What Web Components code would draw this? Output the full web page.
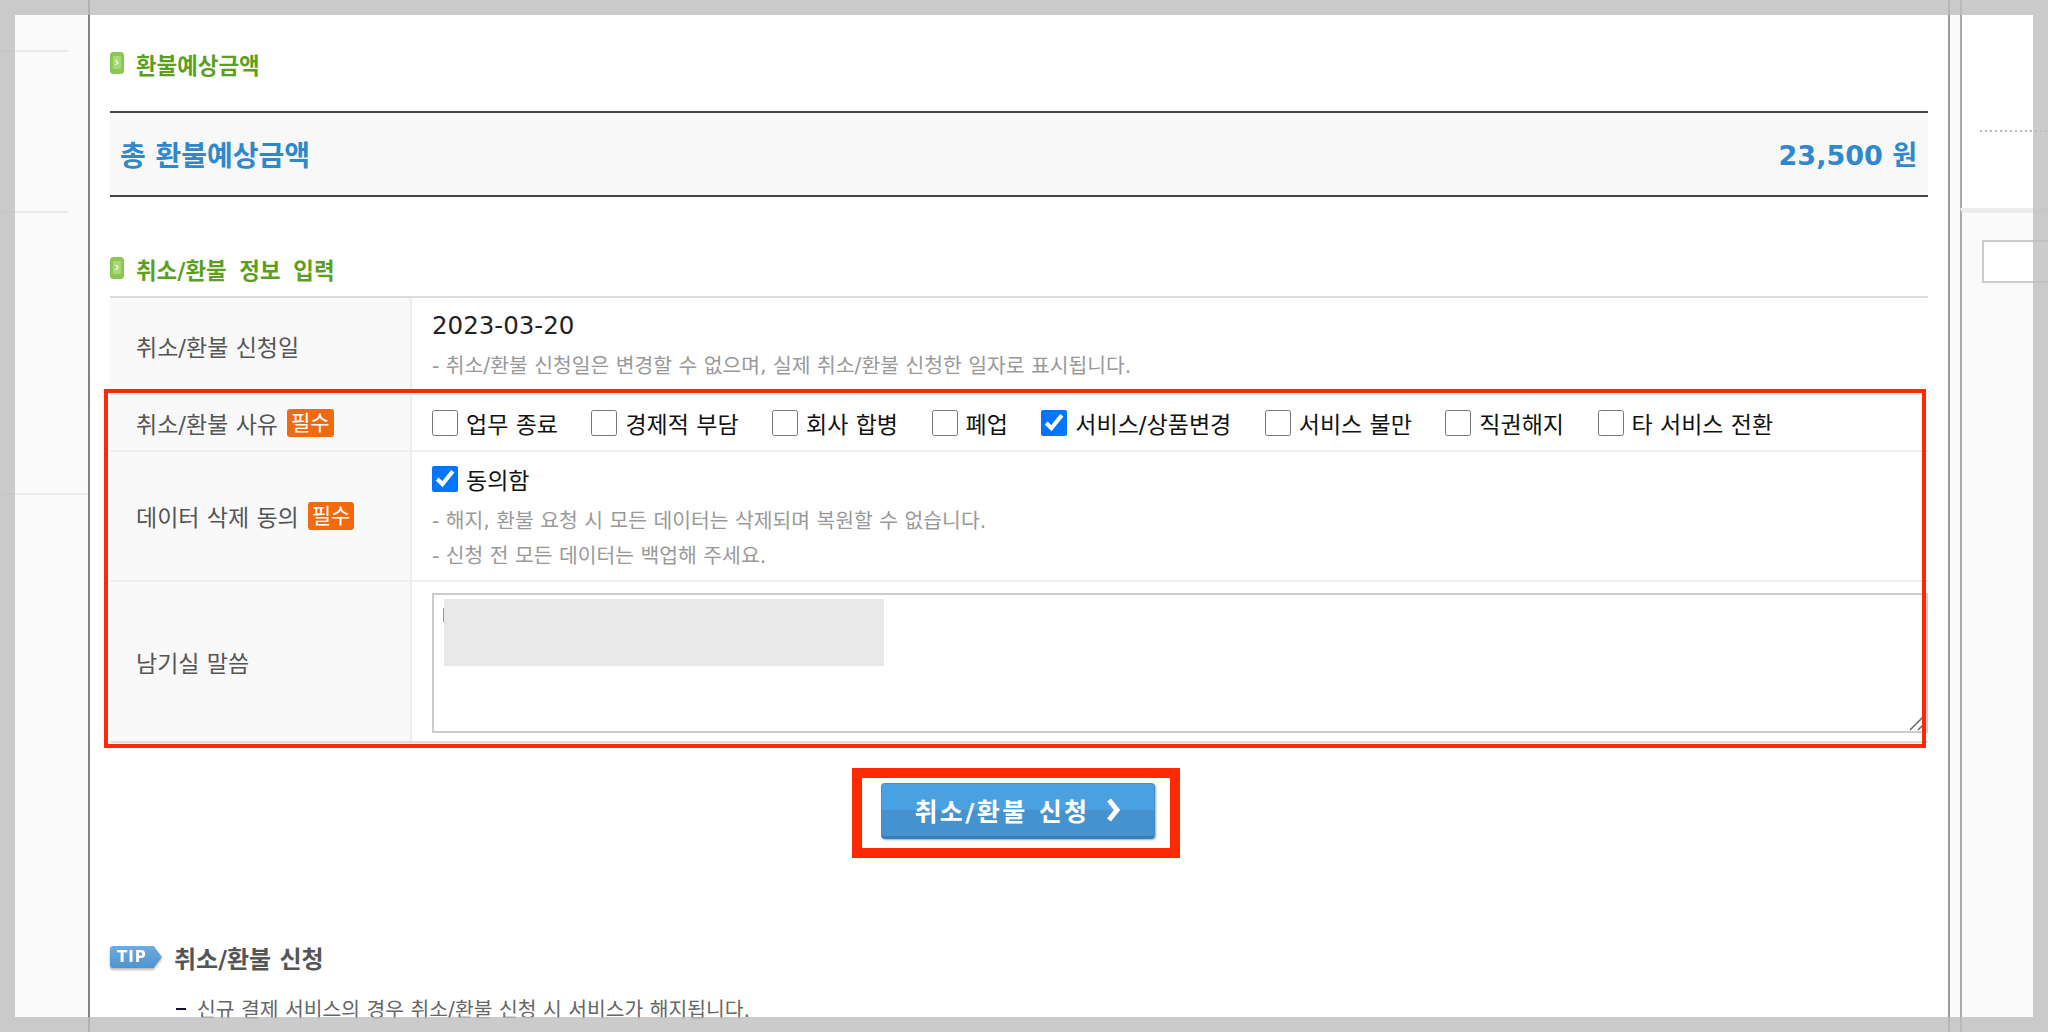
<!DOCTYPE html>
<html lang="ko"><head><meta charset="utf-8"><title>취소/환불 신청</title>
<style>
html,body{margin:0;padding:0;height:1032px;overflow:hidden;background:#fff}
body{font-family:"DejaVu Sans","Noto Sans CJK KR",sans-serif}
</style></head><body>
<refund-page>
  <side-rail slot="left" side="left"></side-rail>
  <side-rail slot="right" side="right"></side-rail>
  <section-heading>환불예상금액</section-heading>
  <total-box label="총 환불예상금액" amount="23,500 원"></total-box>
  <section-heading style="margin-top:60px">취소/환불 정보 입력</section-heading>
  <form-table>
    <form-row label="취소/환불 신청일" h="97">
      <div style="font-size:24.5px;color:#222;line-height:30px;margin-top:4px">2023-03-20</div>
      <hint-line style="margin-top:8px">- 취소/환불 신청일은 변경할 수 없으며, 실제 취소/환불 신청한 일자로 표시됩니다.</hint-line>
    </form-row>
    <red-mark>
      <form-row label="취소/환불 사유" required h="57">
        <check-group>
          <check-item>업무 종료</check-item>
          <check-item>경제적 부담</check-item>
          <check-item>회사 합병</check-item>
          <check-item>폐업</check-item>
          <check-item checked>서비스/상품변경</check-item>
          <check-item>서비스 불만</check-item>
          <check-item>직권해지</check-item>
          <check-item>타 서비스 전환</check-item>
        </check-group>
      </form-row>
      <form-row label="데이터 삭제 동의" required h="130">
        <check-item checked style="margin-top:3px">동의함</check-item>
        <hint-line style="margin-top:8px">- 해지, 환불 요청 시 모든 데이터는 삭제되며 복원할 수 없습니다.</hint-line>
        <hint-line>- 신청 전 모든 데이터는 백업해 주세요.</hint-line>
      </form-row>
      <form-row label="남기실 말씀" h="161" last>
        <memo-box></memo-box>
      </form-row>
    </red-mark>
  </form-table>
  <submit-area>취소/환불 신청</submit-area>
  <tip-block title="취소/환불 신청">
    <li>신규 결제 서비스의 경우 취소/환불 신청 시 서비스가 해지됩니다.</li>
  </tip-block>
  <screen-frame slot="overlay"></screen-frame>
</refund-page>
<script>
const def=(name,css,html)=>{
  customElements.define(name,class extends HTMLElement{
    constructor(){super();this.attachShadow({mode:'open'});}
    connectedCallback(){this.shadowRoot.innerHTML=`<style>${css}</style>${typeof html==='function'?html(this):html}`;}
  });
};
def('refund-page',`
  :host{display:grid;grid-template-columns:88px 2px 1858px 2px 98px;width:2048px;height:1032px;position:relative;overflow:hidden}
  .line{background:#808080}
  .line.r{background:#999}
  main{padding:52px 20px 0 20px;background:#fff;min-width:0}
`,`<slot name="left"></slot><div class="line"></div><main><slot></slot></main><div class="line r"></div><slot name="right"></slot><slot name="overlay"></slot>`);
def('side-rail',`
  :host{display:block;background:#fafafa;height:1032px;position:relative;overflow:hidden}
  .rule{height:2px;background:#eaeaea;width:68px;position:absolute;left:0}
  .head{background:#fff;height:208px;margin-left:10px;border-left:2px solid #aaa;position:relative}
  .body{height:824px;margin-left:10px;border-left:2px solid #aaa;border-top:5px solid #ececec;box-sizing:border-box;padding:27px 0 0 20px}
  .dots{position:absolute;left:18px;right:0;top:130px;height:2px;background:repeating-linear-gradient(90deg,#bbb 0 2px,transparent 2px 5px)}
  .field{height:39px;width:100px;border:2px solid #ccc;background:#fff}
`,el=>el.getAttribute('side')==='left'
  ?`<div class="rule" style="top:50px"></div><div class="rule" style="top:211px"></div><div class="rule" style="top:493px;width:88px"></div>`
  :`<div class="head"><div class="dots"></div></div><div class="body"><div class="field"></div></div>`);
def('screen-frame',`
  :host{position:absolute;inset:0;display:block;pointer-events:none;box-sizing:border-box;border:15px solid rgba(190,190,190,.8)}
`,``);
def('section-heading',`
  :host{display:flex;align-items:center;gap:12px;height:22px;color:#5c9f1f;font-size:22.4px;font-weight:700;white-space:nowrap;word-spacing:5px}
  svg{flex:none}
  span{padding-top:2px}
`,`<svg width="14" height="22" viewBox="0 0 14 22"><rect width="14" height="22" rx="3.500" fill="#8cc653"/><rect x="3" y="4" width="8" height="13" rx="1" fill="#a6d978"/><path d="M5.500 8l2.500 2.500L5.500 13" fill="none" stroke="#e6f5d8" stroke-width="1.500"/></svg><span><slot></slot></span>`);
def('total-box',`
  :host{display:flex;justify-content:space-between;align-items:center;box-sizing:border-box;height:86px;border-top:2px solid #444;border-bottom:2px solid #444;background:#f8f8f8;padding:0 11px 0 10px;color:#2d88cc;font-weight:700;font-size:28px;margin-top:37px}
  .a{font-size:27px;margin-top:-2px}
`,el=>`<span>${el.getAttribute('label')}</span><span class="a">${el.getAttribute('amount')}</span>`);
def('form-table',`:host{display:block;margin-top:17px;border-top:2px solid #dcdce0}`,`<slot></slot>`);
def('form-row',`
  :host{display:grid;grid-template-columns:302px 1fr;box-sizing:border-box;border-bottom:2px solid #eee}
  :host([last]){border-bottom-color:#ddd}
  .th{background:#f9f9f9;border-right:2px solid #eee;display:flex;align-items:center;gap:9px;padding-left:26px;font-size:23px;color:#555;white-space:nowrap}
  .td{padding:0 0 0 20px;display:flex;flex-direction:column;justify-content:center;min-width:0}
  b{background:#f26a10;color:#fff;font-size:21px;font-weight:400;border-radius:3px;padding:0 4px;line-height:28px;height:28px}
`,el=>`<div class="th" style="height:${el.getAttribute('h')-2}px"><span>${el.getAttribute('label')}</span>${el.hasAttribute('required')?'<b>필수</b>':''}</div><div class="td"><slot></slot></div>`);
def('red-mark',`
  :host{display:block;position:relative}
  i{position:absolute;left:-6px;right:2px;top:-6px;bottom:-5px;border:4px solid #ff2a00;pointer-events:none}
`,`<slot></slot><i></i>`);
def('hint-line',`:host{display:block;font-size:20.4px;line-height:35px;color:#999;white-space:nowrap}`,`<slot></slot>`);
def('check-group',`:host{display:flex;gap:33.500px;white-space:nowrap}`,`<slot></slot>`);
def('check-item',`
  :host{display:inline-flex;align-items:center;gap:8px;font-size:23px;color:#111;white-space:nowrap}
  input{width:26px;height:26px;margin:0}
`,el=>`<input type="checkbox" ${el.hasAttribute('checked')?'checked':''}><slot></slot>`);
def('memo-box',`
  :host{display:block}
  .wrap{height:140px;box-sizing:border-box;border:2px solid #ccc;position:relative;padding:4px 10px;background:#fff;margin-top:3px}
  .mask{width:440px;height:67px;background:#e9e9e9}
  .cur{position:absolute;left:9px;top:13px;width:1px;height:14px;background:#999}
  svg{position:absolute;right:1px;bottom:0}
`,`<div class="wrap"><div class="mask"></div><div class="cur"></div><svg width="16" height="16" viewBox="0 0 16 16"><path d="M1 15L15 1M9 15l6-6" stroke="#666" stroke-width="1.500" fill="none"/></svg></div>`);
def('submit-area',`
  :host{display:flex;justify-content:center;margin-top:25px}
  .mark{width:328px;height:90px;box-sizing:border-box;border:10px solid #ff2a00;padding:5px 15px 9px 19px;margin-right:6px}
  .btn{height:56px;box-sizing:border-box;border-radius:4px;display:flex;align-items:center;justify-content:center;gap:16px;color:#fff;font-weight:700;font-size:25px;letter-spacing:2.400px;background:linear-gradient(#49a1e2 0 50%,#4592ce 50%);border:1px solid #3d8fd0;border-bottom:3px solid #2f80c0;box-shadow:1px 1px 2px #aaa}
  svg{flex:none}
`,`<div class="mark"><div class="btn"><span><slot></slot></span><svg width="16" height="24" viewBox="0 0 16 24"><path d="M3 2l8 10-8 10" fill="none" stroke="#fff" stroke-width="5"/></svg></div></div>`);
def('tip-block',`
  :host{display:block;margin-top:87px}
  .t{display:flex;align-items:center;gap:12px;height:24px;font-size:24px;font-weight:700;color:#555;white-space:nowrap}
  .shadow{flex:none;filter:drop-shadow(0 2px 1px #bbb)}
  .tag{width:52px;height:22px;box-sizing:border-box;background:linear-gradient(#6badE3,#4f94d0);color:#fff;font:800 15px "DejaVu Sans",sans-serif;letter-spacing:1px;display:flex;align-items:center;padding-left:7px;clip-path:polygon(0 10%,3% 0,84% 0,100% 50%,84% 100%,3% 100%,0 90%)}
  ul{list-style:none;margin:26px 0 0;padding:0 0 0 87px;font-size:20.400px;color:#666;white-space:nowrap;position:relative}
  ::slotted(li){list-style:none;line-height:30px}
  .d{position:absolute;width:10px;height:2px;background:#113;left:66px;top:13px}
`,el=>`<div class="t"><span class="shadow"><span class="tag">TIP</span></span><span>${el.getAttribute('title')}</span></div><ul><span class="d"></span><slot></slot></ul>`);
</script>
</body></html>
